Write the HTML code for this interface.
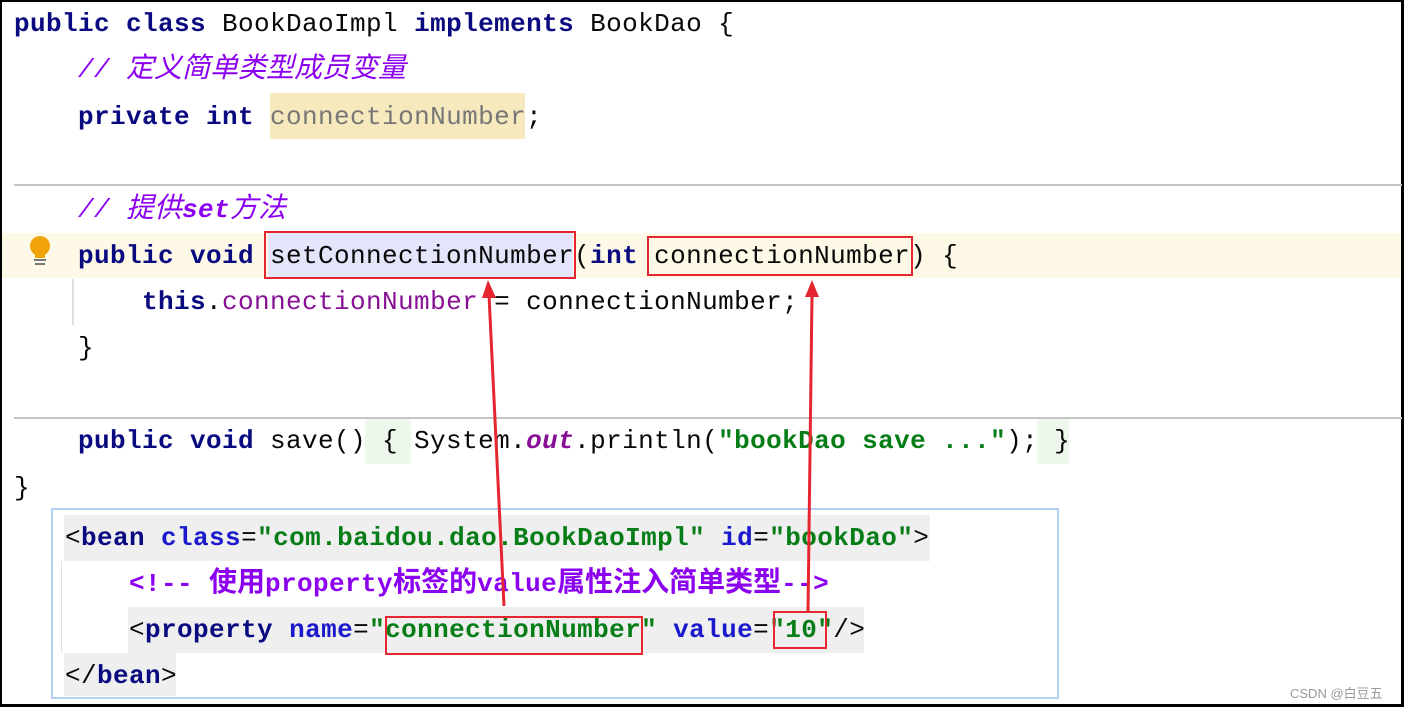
<!DOCTYPE html>
<html><head><meta charset="utf-8"><style>
body{margin:0;width:1404px;height:707px;overflow:hidden;background:#fff;position:relative;font-family:"Liberation Mono","DejaVu Sans Mono","Noto Sans CJK SC",monospace;}
.l{position:absolute;font-size:26px;letter-spacing:0.4px;white-space:pre;line-height:46px;height:46px;color:#080808;}
.k{color:#0a0a80;font-weight:bold}
.c{color:#8c00f0;font-style:italic;font-family:"Liberation Mono","Noto Sans CJK SC",monospace}
.s{color:#067d17;font-weight:bold}
.f{color:#871094}
.a{color:#1a1acc;font-weight:bold}
.x{color:#0a0a80;font-weight:bold}
.z{font-size:28px;letter-spacing:0}
.box{position:absolute;border:2px solid #e52630;}
.bg{position:absolute}
</style></head><body>
<div style="position:absolute;left:0;top:0;width:1404px;height:2px;background:#000"></div>
<div style="position:absolute;left:0;top:0;width:2px;height:707px;background:#000"></div>
<div style="position:absolute;left:1401px;top:0;width:3px;height:707px;background:#000"></div>
<div style="position:absolute;left:0;top:704px;width:1404px;height:3px;background:#000"></div>

<div class="bg" style="left:2px;top:233px;width:1399px;height:45px;background:#fdf9e6"></div>
<div class="bg" style="left:270px;top:93px;width:255px;height:46px;background:#f5e9bd"></div>
<div class="bg" style="left:268px;top:233px;width:305px;height:45px;background:#e4e4fb"></div>
<div class="bg" style="left:365px;top:418px;width:46px;height:46px;background:#edf7ec"></div>
<div class="bg" style="left:1037px;top:418px;width:32px;height:46px;background:#edf7ec"></div>
<div class="bg" style="left:14px;top:184px;width:1388px;height:2px;background:#c4c4c4"></div>
<div class="bg" style="left:14px;top:417px;width:1388px;height:2px;background:#c4c4c4"></div>
<div class="bg" style="left:72px;top:279px;width:2px;height:46px;background:#e0e0e0"></div>

<svg style="position:absolute;left:24px;top:233px" width="32" height="36" viewBox="0 0 32 36"><circle cx="16" cy="13" r="10" fill="#f0a30a"/><rect x="11" y="19" width="10" height="6" fill="#f0a30a"/><rect x="10" y="26" width="12" height="2" fill="#777"/><rect x="11" y="30" width="10" height="2" fill="#777"/></svg>

<div class="l" style="left:14px;top:1px"><span class="k">public class</span> BookDaoImpl <span class="k">implements</span> BookDao {</div>
<div class="l c" style="left:78px;top:47px">// <span class="z">定义简单类型成员变量</span></div>
<div class="l" style="left:78px;top:94px"><span class="k">private int</span> <span style="color:#777">connectionNumber</span>;</div>
<div class="l c" style="left:78px;top:187px">// <span class="z">提供</span><b>set</b><span class="z">方法</span></div>
<div class="l" style="left:78px;top:233px"><span class="k">public void</span> setConnectionNumber(<span class="k">int</span> connectionNumber) {</div>
<div class="l" style="left:142px;top:279px"><span class="k">this</span>.<span class="f">connectionNumber</span> = connectionNumber;</div>
<div class="l" style="left:78px;top:325px">}</div>
<div class="l" style="left:78px;top:418px"><span class="k">public void</span> save() { System.<span class="f" style="font-style:italic;font-weight:bold">out</span>.println(<span class="s">"bookDao save ..."</span>); }</div>
<div class="l" style="left:14px;top:465px">}</div>

<div style="position:absolute;left:51px;top:508px;width:1004px;height:187px;border:2px solid #b4d0f4;background:#fff"></div>
<div class="bg" style="left:64px;top:515px;width:866px;height:46px;background:#efefef"></div>
<div class="bg" style="left:128px;top:607px;width:736px;height:46px;background:#efefef"></div>
<div class="bg" style="left:64px;top:653px;width:112px;height:43px;background:#efefef"></div>
<div class="bg" style="left:61px;top:561px;width:1px;height:92px;background:#e0e0e0"></div>
<div class="l" style="left:65px;top:515px">&lt;<span class="x">bean</span> <span class="a">class</span>=<span class="s">"com.baidou.dao.BookDaoImpl"</span> <span class="a">id</span>=<span class="s">"bookDao"</span>&gt;</div>
<div class="l" style="left:129px;top:561px;color:#8c00f0;font-weight:bold">&lt;!-- <span class="z">使用</span>property<span class="z">标签的</span>value<span class="z">属性注入简单类型</span>--&gt;</div>
<div class="l" style="left:129px;top:607px">&lt;<span class="x">property</span> <span class="a">name</span>=<span class="s">"connectionNumber"</span> <span class="a">value</span>=<span class="s">"10"</span>/&gt;</div>
<div class="l" style="left:65px;top:653px">&lt;/<span class="x">bean</span>&gt;</div>

<div class="box" style="left:264px;top:231px;width:308px;height:44px"></div>
<div class="box" style="left:647px;top:236px;width:262px;height:36px"></div>
<div class="box" style="left:385px;top:616px;width:254px;height:35px"></div>
<div class="box" style="left:773px;top:611px;width:50px;height:34px"></div>

<svg style="position:absolute;left:0;top:0" width="1404" height="707">
<line x1="504" y1="606" x2="489" y2="295" stroke="#e52630" stroke-width="3"/>
<polygon points="488,280 482,298 496,298" fill="#e52630"/>
<line x1="808" y1="612" x2="812" y2="295" stroke="#e52630" stroke-width="3"/>
<polygon points="812,280 805,297 819,297" fill="#e52630"/>
</svg>
<div style="position:absolute;left:1290px;top:683px;font-size:13px;color:#999;font-family:'Liberation Sans','Noto Sans CJK SC',sans-serif">CSDN @白豆五</div>
</body></html>
